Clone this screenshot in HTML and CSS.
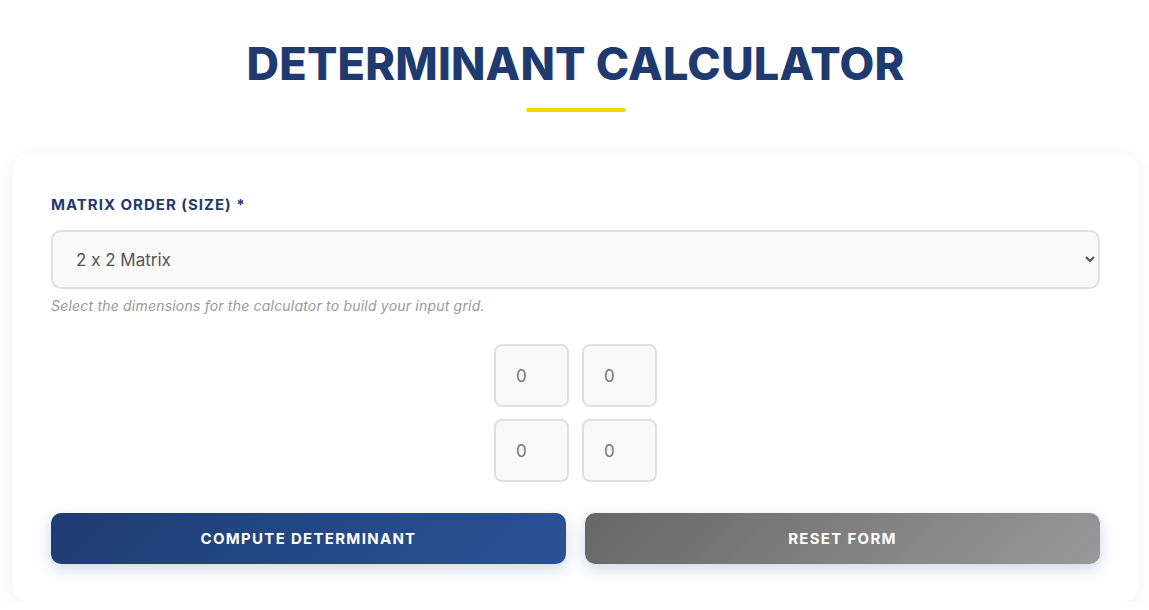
FILE: index.html
```html
<!DOCTYPE html>
<html lang="en">

<head>
  <meta charset="UTF-8">
  <meta name="viewport" content="width=device-width, initial-scale=1.0">
  <title>Determinant Calculator</title>
  <link rel="stylesheet" href="styles.css">
</head>

<body>
  <div class="page">
    <header class="header">
      <h1>Determinant Calculator</h1>
      <div class="title-bar"></div>
    </header>

    <form class="card" onsubmit="return false;">
      <label class="field-label" for="order">Matrix Order (Size) *</label>
      <select id="order" class="order-select">
        <option value="2" selected>2 x 2 Matrix</option>
        <option value="3">3 x 3 Matrix</option>
        <option value="4">4 x 4 Matrix</option>
      </select>
      <p class="help-text">Select the dimensions for the calculator to build your input grid.</p>

      <div class="matrix-grid">
        <input class="cell" type="text" value="0">
        <input class="cell" type="text" value="0">
        <input class="cell" type="text" value="0">
        <input class="cell" type="text" value="0">
      </div>

      <div class="actions">
        <button type="submit" class="btn btn-primary">Compute Determinant</button>
        <button type="reset" class="btn btn-secondary">Reset Form</button>
      </div>
    </form>
  </div>
</body>

</html>
```

FILE: styles.css
```css
body {
  margin: 0;
  font-family: Inter, "Open Sans", sans-serif;
  font-feature-settings: "calt" 0;
  background-color: #fff;
  color: #333;
}

.page {
  padding: 0 11px 0 13px;
}

.header {
  text-align: center;
  padding-top: 38px;
  margin-bottom: 42px;
}

.header h1 {
  margin: 0;
  font-size: 45px;
  font-weight: 800;
  line-height: 52px;
  letter-spacing: 0.2px;
  text-transform: uppercase;
  color: #1e3a6e;
}

.title-bar {
  width: 100px;
  height: 4px;
  margin: 18px auto 0;
  background: #ffd700;
  border-radius: 2px;
}

.card {
  background: white;
  border-radius: 15px;
  padding: 38px 38px 38px 38px;
  box-shadow: 0 5px 20px rgba(0, 0, 0, 0.06);
}

.field-label {
  display: block;
  font-size: 15px;
  font-weight: 700;
  line-height: 20px;
  letter-spacing: 1px;
  text-transform: uppercase;
  color: #1e3a6e;
  padding-top: 3px;
  margin-bottom: 15px;
}

.order-select {
  display: block;
  width: 100%;
  height: 59px;
  padding: 0 10px 0 19px;
  font-family: inherit;
  font-size: 17px;
  font-feature-settings: "calt" 0;
  color: #555;
  background-color: #f9f9f9;
  border: 2px solid #e0e0e0;
  border-radius: 10px;
}

.help-text {
  margin: 8px 0 0;
  font-size: 14px;
  font-style: italic;
  color: #999;
  letter-spacing: 0.2px;
  line-height: 18px;
}

.matrix-grid {
  display: grid;
  grid-template-columns: repeat(2, 75px);
  grid-auto-rows: 63px;
  gap: 12px 13px;
  justify-content: center;
  margin-top: 29px;
}

.cell {
  width: 100%;
  height: 100%;
  box-sizing: border-box;
  padding: 0 0 0 20px;
  font-family: inherit;
  font-size: 17px;
  color: #777;
  background: #f9f9f9;
  border: 2px solid #e0e0e0;
  border-radius: 8px;
}

.actions {
  display: flex;
  gap: 19px;
  margin-top: 31px;
}

.btn {
  flex: 1;
  height: 51px;
  border: none;
  border-radius: 10px;
  font-family: inherit;
  font-size: 15px;
  font-weight: 700;
  letter-spacing: 1.3px;
  text-transform: uppercase;
  color: white;
  cursor: pointer;
  box-shadow: 0 5px 15px rgba(30, 60, 114, 0.2);
}

.btn-primary {
  background: linear-gradient(135deg, #1e3c72, #2a5298);
}

.btn-secondary {
  background: linear-gradient(135deg, #666, #999);
}
```
